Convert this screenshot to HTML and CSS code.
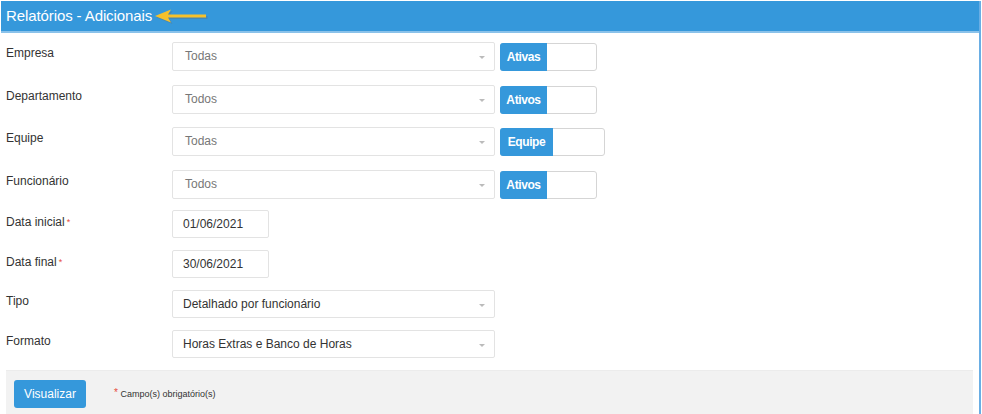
FILE: index.html
```html
<!DOCTYPE html>
<html lang="pt">
<head>
<meta charset="utf-8">
<title>Relatórios - Adicionais</title>
<link rel="stylesheet" href="styles.css">
</head>
<body>
<div class="panel">
  <div class="panel-header">
    <span class="title">Relatórios - Adicionais</span>
    <svg class="arrow" width="56" height="16" viewBox="0 0 56 16">
      <path d="M1 8 L17 1.5 L14 6.5 L52 6.5 L52 9.5 L14 9.5 L17 14.5 Z" fill="#6a6a6a" opacity="0.35" transform="translate(1.5,1.5)"/>
      <path d="M1 8 L17 1.5 L14 6.5 L52 6.5 L52 9.5 L14 9.5 L17 14.5 Z" fill="#f6c12b"/>
    </svg>
  </div>
  <div class="panel-body">
    <div class="row r1">
      <label class="lbl">Empresa</label>
      <div class="select muted"><span>Todas</span><i class="caret"></i></div>
      <div class="toggle"><span class="on">Ativas</span></div>
    </div>
    <div class="row r2">
      <label class="lbl">Departamento</label>
      <div class="select muted"><span>Todos</span><i class="caret"></i></div>
      <div class="toggle"><span class="on">Ativos</span></div>
    </div>
    <div class="row r3">
      <label class="lbl">Equipe</label>
      <div class="select muted"><span>Todas</span><i class="caret"></i></div>
      <div class="toggle wide"><span class="on">Equipe</span></div>
    </div>
    <div class="row r4">
      <label class="lbl">Funcionário</label>
      <div class="select muted"><span>Todos</span><i class="caret"></i></div>
      <div class="toggle"><span class="on">Ativos</span></div>
    </div>
    <div class="row r5">
      <label class="lbl">Data inicial<span class="req">*</span></label>
      <div class="date">01/06/2021</div>
    </div>
    <div class="row r6">
      <label class="lbl">Data final<span class="req">*</span></label>
      <div class="date">30/06/2021</div>
    </div>
    <div class="row r7">
      <label class="lbl">Tipo</label>
      <div class="select dark short"><span>Detalhado por funcionário</span><i class="caret"></i></div>
    </div>
    <div class="row r8">
      <label class="lbl">Formato</label>
      <div class="select dark short"><span>Horas Extras e Banco de Horas</span><i class="caret"></i></div>
    </div>
    <div class="footer">
      <button class="btn">Visualizar</button>
      <span class="note"><span class="req">*</span> Campo(s) obrigatório(s)</span>
    </div>
  </div>
</div>
</body>
</html>
```
FILE: styles.css
```css
* { box-sizing: border-box; }
html, body { margin: 0; padding: 0; background: #fff; }
body {
  font-family: "Liberation Sans", Arial, sans-serif;
  font-size: 12px;
  color: #333;
  width: 982px;
  height: 414px;
  overflow: hidden;
}
.panel {
  margin: 1px 0 0 1px;
  width: 980px;
  height: 413px;
  border-right: 2px solid #6aaee4;
}
.panel-header {
  height: 32px;
  background: #3598db;
  border-bottom: 2px solid #8ac2ea;
  display: flex;
  align-items: center;
  padding-left: 5px;
  padding-bottom: 1px;
}
.title {
  color: #fff;
  font-size: 15px;
  letter-spacing: -0.1px;
}
.arrow { margin-left: 2px; margin-top: 1px; }
.panel-body {
  padding: 9px 0 0 5px;
}
.row {
  display: flex;
  align-items: flex-start;
  height: 43px;
}
.r2 { height: 42px; }
.r3 { height: 43px; }
.r4 { height: 40px; }
.r5, .r6, .r7 { height: 40px; }
.r8 { height: 40px; }
.lbl {
  width: 166px;
  padding-top: 4px;
  font-size: 12px;
  color: #333;
}
.r5 .lbl, .r6 .lbl { padding-top: 5px; }
.req { color: #e74c3c; font-size: 9px; margin-left: 2px; position: relative; top: -1px; }
.select {
  width: 323px;
  height: 29px;
  border: 1px solid #e3e3e3;
  border-radius: 2px;
  display: flex;
  align-items: center;
  justify-content: space-between;
  padding: 0 9px 0 12px;
  font-size: 12px;
}
.select.muted { color: #777; }
.select.muted span { margin-top: -1px; }
.select.dark { color: #333; padding-left: 10px; height: 28px; }
.caret {
  width: 0; height: 0;
  border-left: 3px solid transparent;
  border-right: 3px solid transparent;
  border-top: 3px solid #bbb;
  margin-top: 2px;
}
.toggle {
  margin-left: 5px;
  margin-top: 1px;
  width: 97px;
  height: 28px;
  border: 1px solid #d5d5d5;
  border-radius: 3px;
  display: flex;
}
.toggle.wide { width: 105px; }
.toggle .on {
  background: #3598db;
  color: #fff;
  font-weight: bold;
  font-size: 12px;
  letter-spacing: -0.4px;
  display: flex;
  align-items: center;
  justify-content: center;
  width: 47px;
  margin: -1px 0 -1px -1px;
  border-radius: 3px 0 0 3px;
}
.toggle.wide .on { width: 53px; }
.date {
  width: 97px;
  height: 28px;
  border: 1px solid #e3e3e3;
  border-radius: 2px;
  padding-left: 10px;
  display: flex;
  align-items: center;
  color: #333;
  font-size: 12px;
}
.footer {
  margin: 0 5px 0 0;
  width: 967px;
  height: 44px;
  background: #f2f2f2;
  border-top: 1px solid #ececec;
  display: flex;
  align-items: center;
  padding: 0 0 0 8px;
}
.btn {
  background: #3598db;
  color: #fff;
  border: 0;
  border-radius: 3px;
  width: 72px;
  height: 28px;
  font-family: "Liberation Sans", Arial, sans-serif;
  font-size: 12px;
  margin-top: 2px;
}
.note {
  margin-left: 28px;
  font-size: 9px;
  color: #333;
  margin-top: 2px;
}
.note .req { margin-left: 0; font-size: 10px; }
```
